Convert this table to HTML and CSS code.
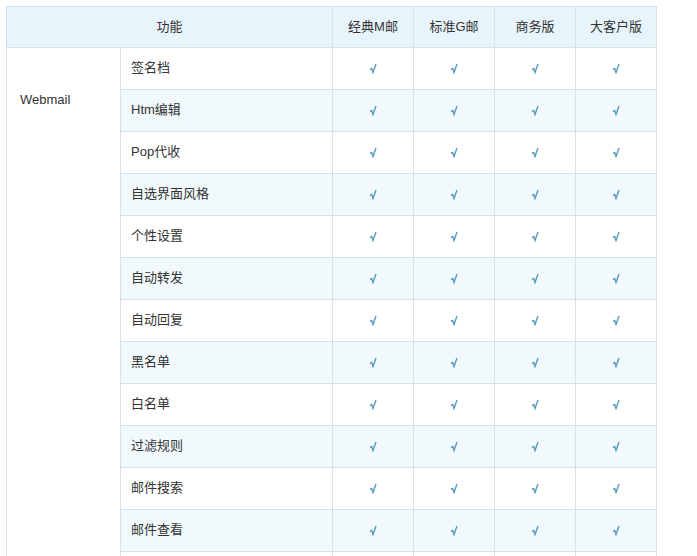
FILE: index.html
```html
<!DOCTYPE html>
<html lang="zh">
<head>
<meta charset="utf-8">
<title>功能对比</title>
<link rel="stylesheet" href="styles.css">
</head>
<body>
<svg class="defs" width="0" height="0" aria-hidden="true">
  <symbol id="tick" viewBox="0 0 8 11">
    <polyline points="1,6.5 2.8,5.6 4,9.6 7,1" fill="none" stroke="currentColor" stroke-width="1.4" stroke-linejoin="miter"/>
  </symbol>
</svg>
<table class="cmp">
  <colgroup>
    <col class="c-grp"><col class="c-feat"><col class="c-v"><col class="c-v"><col class="c-v"><col class="c-v">
  </colgroup>
  <thead>
    <tr><th colspan="2">功能</th><th>经典M邮</th><th>标准G邮</th><th>商务版</th><th>大客户版</th></tr>
  </thead>
  <tbody>
    <tr><td class="grp" rowspan="13"><span>Webmail</span></td><td class="feat">签名档</td><td class="ok"><svg class="tk"><use href="#tick"/></svg></td><td class="ok"><svg class="tk"><use href="#tick"/></svg></td><td class="ok"><svg class="tk"><use href="#tick"/></svg></td><td class="ok"><svg class="tk"><use href="#tick"/></svg></td></tr>
    <tr class="alt"><td class="feat">Htm编辑</td><td class="ok"><svg class="tk"><use href="#tick"/></svg></td><td class="ok"><svg class="tk"><use href="#tick"/></svg></td><td class="ok"><svg class="tk"><use href="#tick"/></svg></td><td class="ok"><svg class="tk"><use href="#tick"/></svg></td></tr>
    <tr><td class="feat">Pop代收</td><td class="ok"><svg class="tk"><use href="#tick"/></svg></td><td class="ok"><svg class="tk"><use href="#tick"/></svg></td><td class="ok"><svg class="tk"><use href="#tick"/></svg></td><td class="ok"><svg class="tk"><use href="#tick"/></svg></td></tr>
    <tr class="alt"><td class="feat">自选界面风格</td><td class="ok"><svg class="tk"><use href="#tick"/></svg></td><td class="ok"><svg class="tk"><use href="#tick"/></svg></td><td class="ok"><svg class="tk"><use href="#tick"/></svg></td><td class="ok"><svg class="tk"><use href="#tick"/></svg></td></tr>
    <tr><td class="feat">个性设置</td><td class="ok"><svg class="tk"><use href="#tick"/></svg></td><td class="ok"><svg class="tk"><use href="#tick"/></svg></td><td class="ok"><svg class="tk"><use href="#tick"/></svg></td><td class="ok"><svg class="tk"><use href="#tick"/></svg></td></tr>
    <tr class="alt"><td class="feat">自动转发</td><td class="ok"><svg class="tk"><use href="#tick"/></svg></td><td class="ok"><svg class="tk"><use href="#tick"/></svg></td><td class="ok"><svg class="tk"><use href="#tick"/></svg></td><td class="ok"><svg class="tk"><use href="#tick"/></svg></td></tr>
    <tr><td class="feat">自动回复</td><td class="ok"><svg class="tk"><use href="#tick"/></svg></td><td class="ok"><svg class="tk"><use href="#tick"/></svg></td><td class="ok"><svg class="tk"><use href="#tick"/></svg></td><td class="ok"><svg class="tk"><use href="#tick"/></svg></td></tr>
    <tr class="alt"><td class="feat">黑名单</td><td class="ok"><svg class="tk"><use href="#tick"/></svg></td><td class="ok"><svg class="tk"><use href="#tick"/></svg></td><td class="ok"><svg class="tk"><use href="#tick"/></svg></td><td class="ok"><svg class="tk"><use href="#tick"/></svg></td></tr>
    <tr><td class="feat">白名单</td><td class="ok"><svg class="tk"><use href="#tick"/></svg></td><td class="ok"><svg class="tk"><use href="#tick"/></svg></td><td class="ok"><svg class="tk"><use href="#tick"/></svg></td><td class="ok"><svg class="tk"><use href="#tick"/></svg></td></tr>
    <tr class="alt"><td class="feat">过滤规则</td><td class="ok"><svg class="tk"><use href="#tick"/></svg></td><td class="ok"><svg class="tk"><use href="#tick"/></svg></td><td class="ok"><svg class="tk"><use href="#tick"/></svg></td><td class="ok"><svg class="tk"><use href="#tick"/></svg></td></tr>
    <tr><td class="feat">邮件搜索</td><td class="ok"><svg class="tk"><use href="#tick"/></svg></td><td class="ok"><svg class="tk"><use href="#tick"/></svg></td><td class="ok"><svg class="tk"><use href="#tick"/></svg></td><td class="ok"><svg class="tk"><use href="#tick"/></svg></td></tr>
    <tr class="alt"><td class="feat">邮件查看</td><td class="ok"><svg class="tk"><use href="#tick"/></svg></td><td class="ok"><svg class="tk"><use href="#tick"/></svg></td><td class="ok"><svg class="tk"><use href="#tick"/></svg></td><td class="ok"><svg class="tk"><use href="#tick"/></svg></td></tr>
    <tr class="tail"><td class="feat"></td><td class="ok"></td><td class="ok"></td><td class="ok"></td><td class="ok"></td></tr>
  </tbody>
</table>
</body>
</html>
```
FILE: styles.css
```css
html, body {
  margin: 0;
  padding: 0;
  background: #fff;
}
body {
  padding: 6px;
  font-family: "Liberation Sans", "Noto Sans CJK SC", sans-serif;
  font-size: 13px;
  color: #333;
}
.defs {
  position: absolute;
  width: 0;
  height: 0;
  overflow: hidden;
}
.cmp {
  border-collapse: collapse;
  table-layout: fixed;
  width: 651px;
  border: 1px solid #d5e2ea;
}
.c-grp { width: 114px; }
.c-feat { width: 212px; }
.c-v { width: 81px; }
.cmp th,
.cmp td {
  border: 1px solid #d5e2ea;
  height: 42px;
  padding: 0;
  box-sizing: border-box;
}
.cmp th {
  height: 41px;
  padding-bottom: 3px;
  background: #e8f4fc;
  font-weight: normal;
  text-align: center;
}
.cmp td.grp {
  vertical-align: top;
  padding: 44px 0 0 13px;
  background: #fff;
}
.cmp td.feat {
  padding: 0 0 4px 10px;
}
.cmp td.ok {
  text-align: center;
  color: #5a9dbd;
  padding-bottom: 2px;
}
.tk {
  display: inline-block;
  width: 8px;
  height: 11px;
  vertical-align: middle;
}
.cmp tr.alt td {
  background: #f2f9fd;
}
```
